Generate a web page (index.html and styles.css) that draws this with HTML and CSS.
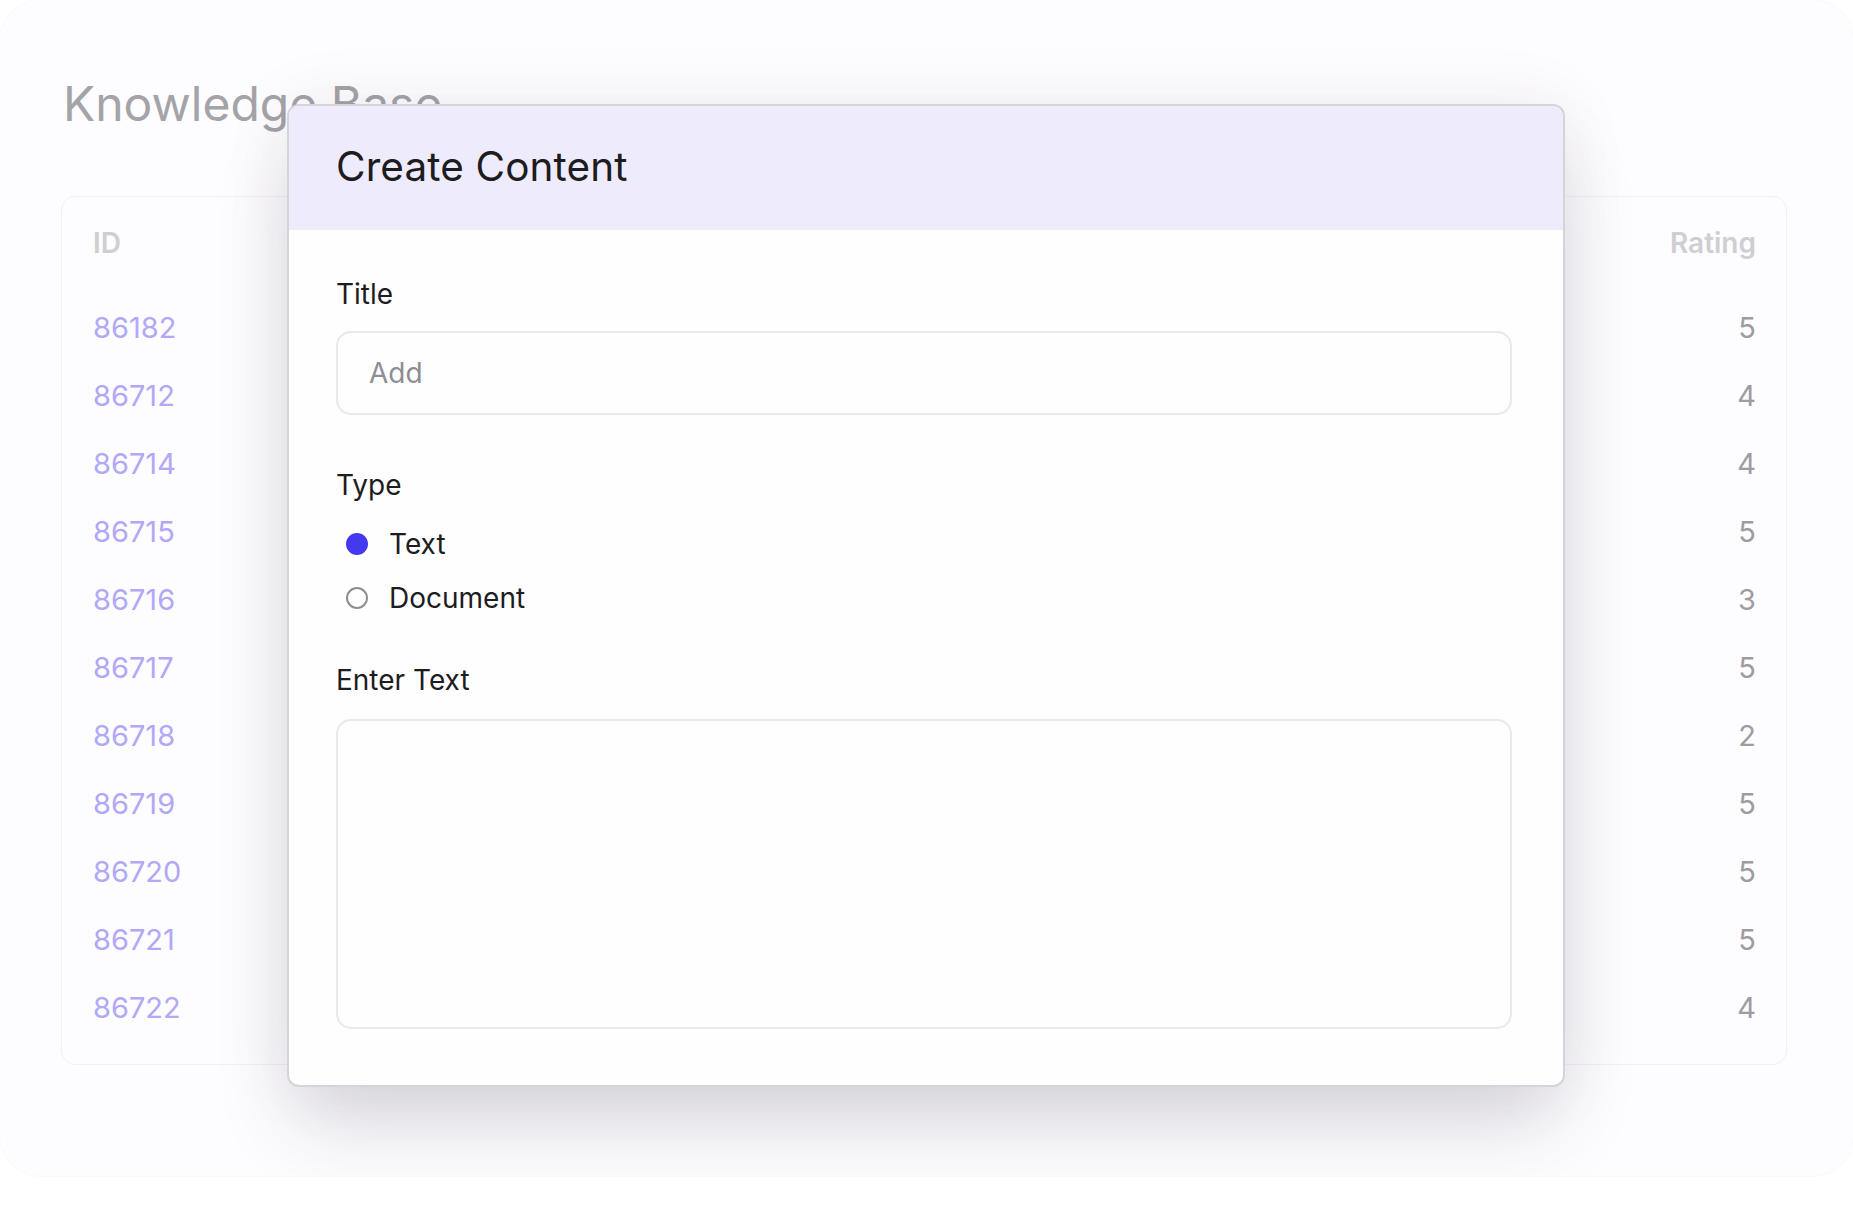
FILE: index.html
```html
<!DOCTYPE html>
<html lang="en">
<head>
<meta charset="utf-8">
<title>Knowledge Base</title>
<link rel="stylesheet" href="styles.css">
</head>
<body>
<div class="frame">
  <main class="page">
    <h1 class="page-title">Knowledge Base</h1>
    <section class="card">
      <div class="row head">
        <span class="col-id">ID</span>
        <span class="col-rating">Rating</span>
      </div>
      <div class="row"><span class="col-id id">86182</span><span class="col-rating rating">5</span></div>
      <div class="row"><span class="col-id id">86712</span><span class="col-rating rating">4</span></div>
      <div class="row"><span class="col-id id">86714</span><span class="col-rating rating">4</span></div>
      <div class="row"><span class="col-id id">86715</span><span class="col-rating rating">5</span></div>
      <div class="row"><span class="col-id id">86716</span><span class="col-rating rating">3</span></div>
      <div class="row"><span class="col-id id">86717</span><span class="col-rating rating">5</span></div>
      <div class="row"><span class="col-id id">86718</span><span class="col-rating rating">2</span></div>
      <div class="row"><span class="col-id id">86719</span><span class="col-rating rating">5</span></div>
      <div class="row"><span class="col-id id">86720</span><span class="col-rating rating">5</span></div>
      <div class="row"><span class="col-id id">86721</span><span class="col-rating rating">5</span></div>
      <div class="row"><span class="col-id id">86722</span><span class="col-rating rating">4</span></div>
    </section>
  </main>

  <div class="modal" role="dialog" aria-label="Create Content">
    <header class="modal-head">
      <h2 class="modal-title">Create Content</h2>
    </header>
    <div class="modal-body">
      <label class="field-label" for="title">Title</label>
      <input class="text-input" id="title" type="text" placeholder="Add">

      <div class="field-label label-type">Type</div>
      <div class="radios">
        <label class="radio-row">
          <span class="radio checked"></span>
          <span class="radio-text">Text</span>
        </label>
        <label class="radio-row">
          <span class="radio"></span>
          <span class="radio-text">Document</span>
        </label>
      </div>

      <label class="field-label label-enter" for="body">Enter Text</label>
      <textarea class="text-area" id="body"></textarea>
    </div>
  </div>
</div>
</body>
</html>
```

FILE: styles.css
```css
* { box-sizing: border-box; }

html, body {
  margin: 0;
  padding: 0;
  background: #ffffff;
}

body {
  font-family: Inter, "Noto Sans", "Liberation Sans", sans-serif;
  width: 1853px;
  height: 1229px;
  overflow: hidden;
}

.frame {
  position: relative;
  height: 1176px;
  border-radius: 40px;
  background: #fdfcfe;
  box-shadow: 0 0 0 1px rgba(0, 0, 0, 0.025);
  overflow: hidden;
}

.page {
  padding: 72px 66px 0 61px;
}

.page-title {
  margin: 0 0 0 2px;
  height: 64px;
  line-height: 64px;
  font-size: 48px;
  font-weight: 400;
  letter-spacing: 0;
  color: #a4a3a8;
}

.card {
  margin-top: 60px;
  width: 1726px;
  height: 869px;
  border: 1.5px solid #f1f0f3;
  border-radius: 14px;
  padding: 28px 30px 0 31px;
  background: #fdfcfe;
}

.row {
  display: flex;
  justify-content: space-between;
  align-items: center;
  height: 68px;
  font-size: 29px;
}

.row.head {
  height: 36px;
  margin-bottom: 32px;
  font-size: 28px;
  font-weight: 600;
  color: #cfced2;
}

.id {
  color: #b1a8f6;
}

.rating {
  color: #9d9ca1;
}

/* Modal */
.modal {
  position: absolute;
  left: 287px;
  top: 104px;
  width: 1278px;
  height: 983px;
  background: #fefefe;
  border: 2px solid #d5d4d9;
  border-radius: 12px;
  overflow: hidden;
  box-shadow: 0 45px 80px -10px rgba(50, 40, 70, 0.17),
              0 0 70px rgba(50, 40, 70, 0.07);
}

.modal-head {
  height: 124px;
  background: #eeebfd;
  display: flex;
  align-items: center;
  padding: 0 0 4px 47px;
}

.modal-title {
  margin: 0;
  font-size: 40.5px;
  font-weight: 400;
  color: #1d1c21;
  letter-spacing: 0.1px;
}

.modal-body {
  display: flex;
  flex-direction: column;
  padding: 46px 51px 0 47px;
}

.field-label {
  display: block;
  height: 36px;
  line-height: 36px;
  font-size: 28px;
  font-weight: 400;
  color: #1d1c21;
}

.text-input {
  margin-top: 19px;
  height: 84px;
  width: 100%;
  border: 2px solid #e9e8ec;
  border-radius: 15px;
  background: #fefefe;
  padding: 0 31px;
  font-family: inherit;
  font-size: 28px;
  color: #1d1c21;
  outline: none;
}

.text-input::placeholder {
  color: #8e8d92;
}

.label-type {
  margin-top: 52px;
}

.radios {
  display: flex;
  flex-direction: column;
  margin-top: 14px;
}

.radio-row {
  display: flex;
  align-items: center;
  height: 54px;
  padding-left: 10px;
}

.radio {
  width: 22px;
  height: 22px;
  border-radius: 50%;
  border: 2px solid #8e8d92;
  background: #fff;
}

.radio.checked {
  border: none;
  background: #4339ef;
}

.radio-text {
  margin-left: 21px;
  font-size: 28px;
  color: #1d1c21;
}

.label-enter {
  margin-top: 37px;
}

.text-area {
  margin-top: 21px;
  width: 100%;
  height: 310px;
  border: 2px solid #e9e8ec;
  border-radius: 15px;
  background: #fefefe;
  resize: none;
  outline: none;
  font-family: inherit;
}
```
